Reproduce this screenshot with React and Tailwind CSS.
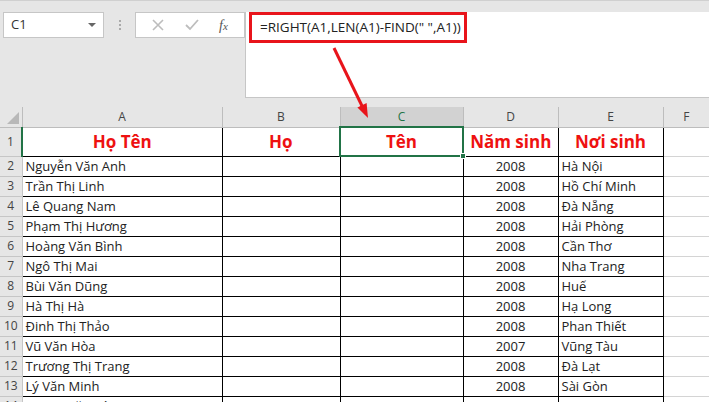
import React from "react";

const rows = [
  ["Nguyễn Văn Anh", "2008", "Hà Nội"],
  ["Trần Thị Linh", "2008", "Hồ Chí Minh"],
  ["Lê Quang Nam", "2008", "Đà Nẵng"],
  ["Phạm Thị Hương", "2008", "Hải Phòng"],
  ["Hoàng Văn Bình", "2008", "Cần Thơ"],
  ["Ngô Thị Mai", "2008", "Nha Trang"],
  ["Bùi Văn Dũng", "2008", "Huế"],
  ["Hà Thị Hà", "2008", "Hạ Long"],
  ["Đinh Thị Thảo", "2008", "Phan Thiết"],
  ["Vũ Văn Hòa", "2007", "Vũng Tàu"],
  ["Trương Thị Trang", "2008", "Đà Lạt"],
  ["Lý Văn Minh", "2008", "Sài Gòn"],
];

const font = { fontFamily: '"Open Sans", "Noto Sans", sans-serif' };

export default function App() {
  return (
    <div className="relative w-[709px] h-[402px] overflow-hidden bg-white text-[#222]" style={font}>
      {/* Formula bar area */}
      <div className="h-[107px] bg-[#e6e6e6] border-t border-[#d0d0d0] flex items-start pt-[11px]">
        <div className="ml-[3px] w-[101px] h-[26px] bg-white border border-[#c6c6c6] flex items-center justify-between pl-[7px] pr-[7px]">
          <span className="text-[13px] text-[#333]">C1</span>
          <span className="w-0 h-0 border-l-[4px] border-r-[4px] border-t-[4px] border-l-transparent border-r-transparent border-t-[#666]" />
        </div>
        <div className="w-[31px] h-[26px] flex flex-col items-center justify-center gap-[2px]">
          <span className="w-[2px] h-[2px] bg-[#aaa]" />
          <span className="w-[2px] h-[2px] bg-[#aaa]" />
          <span className="w-[2px] h-[2px] bg-[#aaa]" />
        </div>
        <div className="w-[110px] h-[26px] bg-white border border-[#c6c6c6] flex items-center justify-around px-[6px]">
          <svg width="12" height="12" viewBox="0 0 12 12"><path d="M1 1L11 11M11 1L1 11" stroke="#bdbdbd" strokeWidth="1.6" /></svg>
          <svg width="14" height="12" viewBox="0 0 14 12"><path d="M1 6L5 10L13 1" stroke="#bdbdbd" strokeWidth="1.8" fill="none" /></svg>
          <span className="text-[14px] italic text-[#555]" style={{ fontFamily: '"Liberation Serif", serif' }}>f<span className="text-[11px]">x</span></span>
        </div>
        <div className="flex-1 h-[86px] bg-white border-l border-b border-[#c6c6c6] pl-[3px]">
          <div className="w-[218px] h-[31px] border-[3px] border-[#e8141b] flex items-center pl-[8px]">
            <span className="text-[13.5px] text-[#222] whitespace-nowrap">=RIGHT(A1,LEN(A1)-FIND(" ",A1))</span>
          </div>
        </div>
      </div>

      {/* Grid */}
      <table className="table-fixed border-collapse w-[709px]">
        <colgroup>
          <col className="w-[22px]" />
          <col className="w-[200px]" />
          <col className="w-[118px]" />
          <col className="w-[123px]" />
          <col className="w-[95px]" />
          <col className="w-[105px]" />
          <col />
        </colgroup>
        <thead>
          <tr className="h-[20px] bg-[#e6e6e6] text-[12px] text-[#444]">
            <th className="relative p-0 border-b border-[#bdbdbd]">
              <span className="absolute right-[3px] bottom-[3px] w-0 h-0" style={{ borderBottom: "12px solid #b8b8b8", borderLeft: "12px solid transparent" }} />
            </th>
            {["A", "B"].map((c) => (
              <th key={c} className="p-0 font-normal border-l border-b border-[#bdbdbd]">{c}</th>
            ))}
            <th className="p-0 font-normal bg-[#d2d2d2] text-[#217346] border-l border-[#bdbdbd] border-b-2 border-b-[#217346]">C</th>
            {["D", "E", "F"].map((c) => (
              <th key={c} className="p-0 font-normal border-l border-b border-[#bdbdbd]">{c}</th>
            ))}
          </tr>
        </thead>
        <tbody>
          <tr className="h-[29px]">
            <td className="p-0 bg-[#e6e6e6] text-center text-[12px] text-[#444] border-b border-[#c6c6c6] border-r-2 border-r-[#217346]">1</td>
            <td className="p-0 border border-black text-center text-[17px] font-bold text-[#ee1111]">Họ Tên</td>
            <td className="p-0 border border-black text-center text-[17px] font-bold text-[#ee1111]">Họ</td>
            <td className="p-0 border-2 border-[#217346] text-center text-[17px] font-bold text-[#ee1111] relative">
              Tên
              <span className="absolute -right-[4px] -bottom-[4px] w-[6px] h-[6px] bg-[#217346] border border-white" />
            </td>
            <td className="p-0 border border-black text-center text-[17px] font-bold text-[#ee1111]">Năm sinh</td>
            <td className="p-0 border border-black text-center text-[17px] font-bold text-[#ee1111]">Nơi sinh</td>
            <td className="p-0 border-b border-[#d4d4d4]"></td>
          </tr>
          {rows.map((r, i) => (
            <tr key={i} className="h-[20px] text-[13px]">
              <td className="p-0 bg-[#e6e6e6] text-center text-[12px] text-[#444] border-b border-r border-[#c6c6c6]">{i + 2}</td>
              <td className="p-0 pl-[3px] border border-black whitespace-nowrap leading-[18px]">{r[0]}</td>
              <td className="p-0 border border-black"></td>
              <td className="p-0 border border-black"></td>
              <td className="p-0 border border-black text-center leading-[18px]">{r[1]}</td>
              <td className="p-0 pl-[3px] border border-black whitespace-nowrap leading-[18px]">{r[2]}</td>
              <td className="p-0 border-b border-[#d4d4d4]"></td>
            </tr>
          ))}
          <tr className="h-[20px] text-[13px]">
            <td className="p-0 bg-[#e6e6e6] text-center text-[12px] text-[#444] border-r border-[#c6c6c6]">14</td>
            <td className="p-0 pl-[3px] border-r border-black whitespace-nowrap">Lương Văn Tú</td>
            <td className="p-0 border-r border-black"></td>
            <td className="p-0 border-r border-black"></td>
            <td className="p-0 border-r border-black"></td>
            <td className="p-0 border-r border-black"></td>
            <td className="p-0"></td>
          </tr>
        </tbody>
      </table>

      {/* Annotation arrow */}
      <svg className="absolute left-0 top-0 pointer-events-none" width="709" height="402">
        <line x1="334" y1="48" x2="363" y2="108" stroke="#e8141b" strokeWidth="3" />
        <polygon points="368,118 366.6,103 357.4,107.6" fill="#e8141b" />
      </svg>
    </div>
  );
}
